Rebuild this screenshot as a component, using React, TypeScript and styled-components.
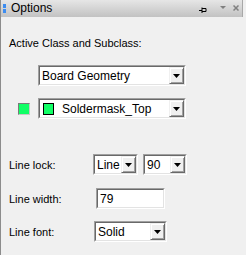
import React from 'react';
import styled, { createGlobalStyle } from 'styled-components';

const GlobalStyle = createGlobalStyle`
  html, body {
    margin: 0;
    padding: 0;
    background: #f0f0f0;
  }
  body {
    font-family: "Liberation Sans", Arial, sans-serif;
    font-size: 11px;
    color: #000;
  }
`;

const Panel = styled.div`
  width: 246px;
  height: 255px;
  box-sizing: border-box;
  border-left: 1px solid #8c8c8c;
  background: #f0f0f0;
  display: flex;
  flex-direction: column;
  overflow: hidden;
`;

const TitleBar = styled.div`
  height: 17px;
  box-sizing: border-box;
  margin-right: 3px;
  background: linear-gradient(#e6e6e6, #c2c2c2);
  border-right: 1px solid #a8a8a8;
  display: flex;
  align-items: center;
  padding-left: 2px;
  padding-right: 3px;
`;

const Grip = styled.div`
  width: 3px;
  display: flex;
  flex-direction: column;
  gap: 1px;
  margin-right: 5px;

  span {
    height: 4px;
    background: #3c8cf0;
  }
`;

const Title = styled.div`
  font-size: 12px;
  flex: 1;
  line-height: 17px;
`;

const TitleIcon = styled.svg<{ $gap: number }>`
  display: block;
  margin-left: ${({ $gap }) => $gap}px;
`;

const Body = styled.div`
  flex: 1;
  padding: 19px 0 0 8px;
  display: flex;
  flex-direction: column;
`;

const Heading = styled.div`
  height: 14px;
  line-height: 14px;
`;

const ClassRow = styled.div<{ $top: number }>`
  display: flex;
  align-items: center;
  margin-top: ${({ $top }) => $top}px;
`;

const Spacer = styled.div`
  width: 29px;
`;

const Swatch = styled.div`
  width: 12px;
  height: 12px;
  box-sizing: border-box;
  border: 1px solid #7a7a7a;
  border-right-color: #c8c8c8;
  border-bottom-color: #c8c8c8;
  background: #11ff66;
  margin-left: 9px;
  margin-right: 8px;
`;

const FieldRow = styled.div<{ $top: number }>`
  display: flex;
  align-items: center;
  margin-top: ${({ $top }) => $top}px;
`;

const Label = styled.div`
  width: 84px;
`;

const Sunken = styled.div<{ $w: number; $ml?: number }>`
  width: ${({ $w }) => $w}px;
  height: 21px;
  margin-left: ${({ $ml }) => $ml ?? 0}px;
  box-sizing: border-box;
  border: 1px solid;
  border-color: #a0a0a0 #ffffff #ffffff #a0a0a0;
  background: #fff;
  display: flex;
`;

const Inner = styled.div`
  flex: 1;
  display: flex;
  align-items: center;
  border: 1px solid;
  border-color: #696969 #e3e3e3 #e3e3e3 #696969;
  padding-left: 2px;
  font-size: 12px;
  min-width: 0;
`;

const ValueText = styled.span`
  flex: 1;
  white-space: nowrap;
  overflow: hidden;
`;

const DropButton = styled.div`
  width: 15px;
  align-self: stretch;
  box-sizing: border-box;
  background: #f0f0f0;
  border: 1px solid;
  border-color: #f0f0f0 #696969 #696969 #f0f0f0;
  box-shadow: inset 1px 1px 0 #ffffff, inset -1px -1px 0 #a0a0a0;
  display: flex;
  align-items: center;
  justify-content: center;
`;

const ItemSwatch = styled.div`
  width: 11px;
  height: 12px;
  box-sizing: border-box;
  border: 1px solid #000;
  background: #11ff66;
  margin-left: 1px;
  margin-right: 8px;
`;

const Arrow = () => (
  <svg width="7" height="4" viewBox="0 0 7 4">
    <path d="M0 0h7L3.5 4z" fill="#000" />
  </svg>
);

const Combo: React.FC<{ w: number; ml?: number; swatch?: boolean; children: React.ReactNode }> = ({
  w,
  ml,
  swatch,
  children,
}) => (
  <Sunken $w={w} $ml={ml}>
    <Inner>
      {swatch && <ItemSwatch />}
      <ValueText>{children}</ValueText>
      <DropButton>
        <Arrow />
      </DropButton>
    </Inner>
  </Sunken>
);

const TextField: React.FC<{ w: number; value: string }> = ({ w, value }) => (
  <Sunken $w={w} $ml={3}>
    <Inner>
      <ValueText>{value}</ValueText>
    </Inner>
  </Sunken>
);

export default function App() {
  return (
    <>
      <GlobalStyle />
      <Panel>
        <TitleBar>
          <Grip>
            <span />
            <span />
          </Grip>
          <Title>Options</Title>
          <TitleIcon $gap={0} width="8" height="6" viewBox="0 0 8 6" style={{ marginTop: 3 }}>
            <path d="M0 3.5h3M3 0.5v6M3 1.5h4v3H3" stroke="#000" strokeWidth="1" fill="none" />
          </TitleIcon>
          <TitleIcon $gap={13} width="6" height="3" viewBox="0 0 6 3" style={{ marginTop: -2 }}>
            <path d="M0 0h6L3 3z" fill="#808080" />
          </TitleIcon>
          <TitleIcon $gap={7} width="6" height="6" viewBox="0 0 6 6" style={{ marginTop: -2 }}>
            <path d="M0.5 0.5l5 5M5.5 0.5l-5 5" stroke="#808080" strokeWidth="1.5" />
          </TitleIcon>
        </TitleBar>
        <Body>
          <Heading>Active Class and Subclass:</Heading>
          <ClassRow $top={15}>
            <Spacer />
            <Combo w={148}>Board Geometry</Combo>
          </ClassRow>
          <ClassRow $top={12}>
            <Swatch />
            <Combo w={148} swatch>
              Soldermask_Top
            </Combo>
          </ClassRow>
          <FieldRow $top={35}>
            <Label>Line lock:</Label>
            <Combo w={45}>Line</Combo>
            <Combo w={44} ml={5}>
              90
            </Combo>
          </FieldRow>
          <FieldRow $top={13}>
            <Label>Line width:</Label>
            <TextField w={69} value="79" />
          </FieldRow>
          <FieldRow $top={12}>
            <Label>Line font:</Label>
            <Combo w={73} ml={1}>
              Solid
            </Combo>
          </FieldRow>
        </Body>
      </Panel>
    </>
  );
}
